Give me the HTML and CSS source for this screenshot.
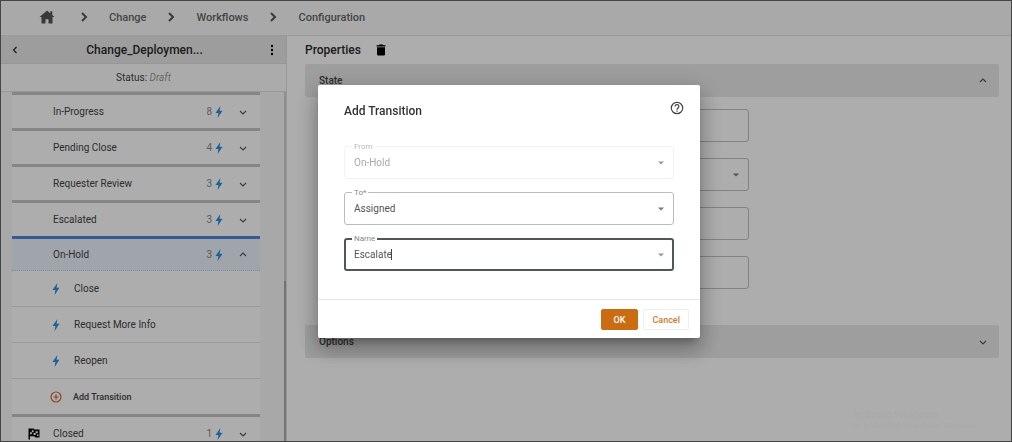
FILE: index.html
```html
<!DOCTYPE html>
<html lang="en">
<head>
  <meta charset="UTF-8" />
  <meta name="viewport" content="width=device-width, initial-scale=1" />
  <title>Workflow Configuration</title>
  <link rel="stylesheet" href="styles.css">
</head>
<body>
  <svg class="sprite" aria-hidden="true">
    <symbol id="bolt" viewBox="0 0 8 12"><path d="M5.4 0 0.5 7H3.4L2.6 12 7.5 4.8H4.6Z" /></symbol>
    <symbol id="down" viewBox="0 0 12 12"><path d="M3 5 6 8 9 5" /></symbol>
    <symbol id="up" viewBox="0 0 12 12"><path d="M3 7 6 4 9 7" /></symbol>
    <symbol id="crumb" viewBox="0 0 10 12"><path d="M3 2 7 6 3 10" /></symbol>
  </svg>

  <nav class="breadcrumb" aria-label="Breadcrumb">
    <a href="#" class="home" aria-label="Home">
      <svg width="16" height="14" viewBox="0 0 16 14"><path d="M8 0.500 15.500 7H13.500V13.500H9.500V9.200H6.500V13.500H2.500V7H0.500ZM11.300 1.300H13.300V5H11.300Z" /></svg>
    </a>
    <svg class="crumb" width="10" height="12"><use href="#crumb" /></svg>
    <a href="#">Change</a>
    <svg class="crumb" width="10" height="12"><use href="#crumb" /></svg>
    <a href="#">Workflows</a>
    <svg class="crumb" width="10" height="12"><use href="#crumb" /></svg>
    <a href="#">Configuration</a>
  </nav>

  <div class="layout">
    <aside class="sidebar">
      <header class="sidebar-header">
        <button class="icon-btn" aria-label="Back">
          <svg class="line back" width="8" height="10" viewBox="0 0 8 10"><path d="M5.500 2 2.500 5 5.500 8" /></svg>
        </button>
        <h2>Change_Deploymen...</h2>
        <button class="icon-btn" aria-label="More">
          <svg width="4" height="12" viewBox="0 0 4 12"><circle cx="2" cy="2" r="1.200" /><circle cx="2" cy="6" r="1.200" /><circle cx="2" cy="10" r="1.200" /></svg>
        </button>
      </header>
      <p class="status">Status: <em>Draft</em></p>
      <div class="states">
        <ul class="state-list">
          <li class="state">
            <span class="name">In-Progress</span><span class="count">8</span>
            <svg class="bolt" width="8" height="12"><use href="#bolt" /></svg>
            <button class="icon-btn" aria-label="Expand In-Progress"><svg class="line" width="12" height="12"><use href="#down" /></svg></button>
          </li>
          <li class="state">
            <span class="name">Pending Close</span><span class="count">4</span>
            <svg class="bolt" width="8" height="12"><use href="#bolt" /></svg>
            <button class="icon-btn" aria-label="Expand Pending Close"><svg class="line" width="12" height="12"><use href="#down" /></svg></button>
          </li>
          <li class="state">
            <span class="name">Requester Review</span><span class="count">3</span>
            <svg class="bolt" width="8" height="12"><use href="#bolt" /></svg>
            <button class="icon-btn" aria-label="Expand Requester Review"><svg class="line" width="12" height="12"><use href="#down" /></svg></button>
          </li>
          <li class="state">
            <span class="name">Escalated</span><span class="count">3</span>
            <svg class="bolt" width="8" height="12"><use href="#bolt" /></svg>
            <button class="icon-btn" aria-label="Expand Escalated"><svg class="line" width="12" height="12"><use href="#down" /></svg></button>
          </li>
          <li class="state active">
            <span class="name">On-Hold</span><span class="count">3</span>
            <svg class="bolt" width="8" height="12"><use href="#bolt" /></svg>
            <button class="icon-btn" aria-label="Collapse On-Hold"><svg class="line" width="12" height="12"><use href="#up" /></svg></button>
          </li>
          <li class="transition"><svg class="bolt" width="8" height="12"><use href="#bolt" /></svg>Close</li>
          <li class="transition"><svg class="bolt" width="8" height="12"><use href="#bolt" /></svg>Request More Info</li>
          <li class="transition"><svg class="bolt" width="8" height="12"><use href="#bolt" /></svg>Reopen</li>
          <li class="transition add">
            <button class="add-btn">
              <svg width="12" height="12" viewBox="0 0 12 12"><circle cx="6" cy="6" r="5" /><path d="M6 3.500V8.500M3.500 6H8.500" /></svg>
              Add Transition
            </button>
          </li>
          <li class="state final">
            <svg class="flag" width="12" height="12" viewBox="0 0 12 12">
              <path fill-rule="evenodd" d="M0.500 0.500H5.500L6.500 1.500H11.500V9.500H7.500L6.300 8.200H2V11.500H0.500ZM3.800 2.200V4.200H5.600V2.200ZM2 4.200V6.200H3.800V4.200ZM7.600 3.200V5.200H9.800V3.200ZM5.600 5V7H7.600V5ZM9 6.500V8H10.500V6.500Z" />
            </svg>
            <span class="name">Closed</span><span class="count">1</span>
            <svg class="bolt" width="8" height="12"><use href="#bolt" /></svg>
            <button class="icon-btn" aria-label="Expand Closed"><svg class="line" width="12" height="12"><use href="#down" /></svg></button>
          </li>
        </ul>
        <div class="scrollbar"></div>
      </div>
    </aside>

    <main class="properties">
      <div class="properties-header">
        <h2>Properties</h2>
        <button class="icon-btn" aria-label="Delete">
          <svg width="10" height="12" viewBox="0 0 10 12"><path d="M3.200 0.500H6.800L7.300 1.200H9.500V2.500H0.500V1.200H2.700ZM1 3.200H9V10.300Q9 11.500 7.800 11.500H2.200Q1 11.500 1 10.300Z" /></svg>
        </button>
      </div>
      <button class="panel" aria-expanded="true">State <svg class="line" width="12" height="12"><use href="#up" /></svg></button>
      <div class="panel-body">
        <input type="text" class="prop" aria-label="State name">
        <div class="prop-select">
          <select class="prop" aria-label="State type"><option></option></select>
          <svg class="arrow" width="6" height="4" viewBox="0 0 6 4"><path d="M0 0.500H6L3 3.500Z" /></svg>
        </div>
        <input type="text" class="prop" aria-label="State description">
        <input type="text" class="prop" aria-label="State owner">
      </div>
      <button class="panel" aria-expanded="false">Options <svg class="line" width="12" height="12"><use href="#down" /></svg></button>
    </main>
  </div>

  <div class="watermark">
    <strong>Activate Windows</strong>
    <span>Go to Settings to activate Windows.</span>
  </div>

  <div class="overlay">
    <form class="dialog" role="dialog" aria-labelledby="dialog-title">
      <header class="dialog-header">
        <h1 id="dialog-title">Add Transition</h1>
        <button type="button" class="icon-btn" aria-label="Help">
          <svg class="help" width="14" height="14" viewBox="0 0 14 14"><circle cx="7" cy="7" r="5.700" /><path d="M5.100 5.600C5.100 3 8.900 3.100 8.900 5.500C8.900 6.900 7 7 7 8.700M7 9.600V10.800" /></svg>
        </button>
      </header>
      <div class="dialog-body">
        <div class="field disabled">
          <label for="from">From</label>
          <select id="from" disabled><option>On-Hold</option></select>
          <svg class="arrow" width="6" height="4" viewBox="0 0 6 4"><path d="M0 0.500H6L3 3.500Z" /></svg>
        </div>
        <div class="field">
          <label for="to">To*</label>
          <select id="to"><option>Assigned</option></select>
          <svg class="arrow" width="6" height="4" viewBox="0 0 6 4"><path d="M0 0.500H6L3 3.500Z" /></svg>
        </div>
        <div class="field focused">
          <label for="name">Name</label>
          <input type="text" id="name" value="Escalate">
          <span class="caret"></span>
          <svg class="arrow" width="6" height="4" viewBox="0 0 6 4"><path d="M0 0.500H6L3 3.500Z" /></svg>
        </div>
      </div>
      <footer class="dialog-footer">
        <button type="button" class="btn primary">OK</button>
        <button type="button" class="btn">Cancel</button>
      </footer>
    </form>
  </div>
</body>
</html>
```
FILE: styles.css
```css
* {
  box-sizing: border-box;
}
body {
  display: flex;
  flex-direction: column;
  height: 100vh;
  margin: 0;
  border: 1px solid #666;
  overflow: hidden;
  background: #fff;
  color: #444;
  font-family: Roboto, Arial, sans-serif;
  font-size: 10px;
}
h1, h2, p, ul {
  margin: 0;
  padding: 0;
}
button, input, select {
  font: inherit;
  color: inherit;
}
.sprite {
  display: none;
}
.icon-btn {
  display: flex;
  padding: 0;
  border: none;
  background: none;
  cursor: pointer;
}
.line {
  fill: none;
  stroke: #555;
  stroke-width: 1.1;
}
.back {
  stroke: #222;
}

.breadcrumb {
  display: flex;
  align-items: center;
  height: 35px;
  padding: 0 38px 2px;
  border-bottom: 1px solid #e4e4e4;
  background: #fafafa;
  font-size: 11px;
  font-weight: 500;
}
.breadcrumb a {
  color: #666;
  text-decoration: none;
}
.breadcrumb .home {
  display: flex;
  margin-right: 4px;
}
.home svg {
  fill: #555;
}
.crumb {
  margin: 0 20px;
  fill: none;
  stroke: #555;
  stroke-width: 2;
}

.layout {
  display: flex;
  flex: 1;
  min-height: 0;
}
.sidebar {
  display: flex;
  flex-direction: column;
  width: 286px;
  flex-shrink: 0;
  border-right: 1px solid #e0e0e0;
  background: #f8f8f8;
}
.sidebar-header {
  display: flex;
  align-items: center;
  justify-content: space-between;
  height: 28px;
  padding: 0 12px 0 10px;
  border-bottom: 1px solid #ddd;
  background: #e8e8e8;
}
.sidebar-header h2, .properties h2 {
  color: #2c2c2c;
  font-size: 12px;
  font-weight: 500;
}
.status {
  height: 28px;
  border-bottom: 1px solid #e0e0e0;
  background: #fdfdfd;
  line-height: 28px;
  text-align: center;
}
.status em {
  color: #999;
}
.states {
  display: flex;
  flex: 1;
  justify-content: space-between;
  min-height: 0;
  padding-left: 11px;
  overflow: hidden;
}
.state-list {
  width: 248px;
  list-style: none;
}
.scrollbar {
  width: 2px;
  background: linear-gradient(#d2d2d2 189px, #aaa 189px);
}
.state {
  display: flex;
  align-items: center;
  height: 36px;
  padding: 0 11px 0 41px;
  border-top: 3px solid #c4c4c4;
  background: #fff;
}
.state .name {
  flex: 1;
}
.count {
  color: #888;
}
.bolt {
  fill: #2a8fe0;
}
.state .bolt {
  margin: 0 14px 0 3px;
}
.active {
  height: 35px;
  border-top-color: #4f83dc;
  border-bottom: 1px dotted #b8cfe4;
  background: #ebf3fb;
}
.final {
  padding-left: 16px;
}
.flag {
  margin-right: 13px;
  fill: #000;
}
.transition {
  display: flex;
  align-items: center;
  gap: 14px;
  height: 36px;
  padding-left: 40px;
  border-bottom: 1px solid #e4e4e4;
  background: #fff;
}
.transition.add {
  height: 35px;
  padding-left: 38px;
  border-bottom: none;
}
.add-btn {
  display: flex;
  align-items: center;
  gap: 11px;
  padding: 0;
  border: none;
  background: none;
  font-size: 9px;
  font-weight: 500;
  cursor: pointer;
}
.add-btn svg {
  fill: none;
  stroke: #d3663a;
  stroke-width: 1.2;
}

.properties {
  flex: 1;
  padding: 0 12px 0 18px;
}
.properties-header {
  display: flex;
  align-items: center;
  gap: 15px;
  height: 28px;
}
.panel {
  display: flex;
  align-items: center;
  justify-content: space-between;
  width: 100%;
  height: 33px;
  padding: 0 10px 0 14px;
  border: none;
  border-radius: 2px;
  background: #e9e9e9;
  font-weight: 500;
}
.panel-body {
  display: grid;
  gap: 16px;
  max-width: 444px;
  padding: 12px 0 36px 14px;
}
.prop {
  display: block;
  width: 100%;
  height: 33px;
  border: 1px solid #c0c0c0;
  border-radius: 3px;
  background: #fff;
  appearance: none;
}
.prop-select, .field {
  position: relative;
}
.arrow {
  position: absolute;
  top: 15px;
  right: 10px;
  fill: #777;
  pointer-events: none;
}

.watermark {
  position: absolute;
  right: 34px;
  bottom: 12px;
  color: #fbfbfb;
  font-size: 8px;
}
.watermark strong {
  display: block;
  font-size: 11px;
  font-weight: 400;
}

.overlay {
  position: fixed;
  inset: 0;
  display: flex;
  align-items: flex-start;
  justify-content: center;
  padding: 85px 0 0 6px;
  background: rgba(0, 0, 0, 0.32);
}
.dialog {
  width: 382px;
  max-width: 100%;
  border-radius: 2px;
  background: #fff;
  box-shadow: 0 6px 8px -4px rgba(0, 0, 0, 0.3), 0 12px 20px 2px rgba(0, 0, 0, 0.2), 0 4px 24px 4px rgba(0, 0, 0, 0.12);
}
.dialog-header {
  display: flex;
  justify-content: space-between;
  padding: 16px 16px 0 26px;
}
.dialog-header h1 {
  color: #333;
  font-size: 12px;
  font-weight: 500;
  line-height: 20px;
}
.help {
  fill: none;
  stroke: #444;
  stroke-width: 1.2;
}
.dialog-body {
  display: grid;
  gap: 13px;
  padding: 25px 26px 28px;
}
.field label {
  position: absolute;
  top: -4px;
  left: 8px;
  padding: 0 2px;
  background: #fff;
  color: #8a8a8a;
  font-size: 8px;
  line-height: 9px;
}
.field select, .field input {
  display: block;
  width: 100%;
  height: 33px;
  padding: 0 9px;
  border: 1px solid #bbb;
  border-radius: 3px;
  background: #fff;
  color: #555;
  outline: none;
  appearance: none;
}
.field.disabled select {
  border-color: #f2f2f2;
  color: #aaa;
  opacity: 1;
}
.field.disabled label {
  color: #bbb;
}
.disabled .arrow, .focused .arrow {
  fill: #999;
}
.field.focused input {
  padding: 0 8px;
  border: 2px solid #50565d;
}
.caret {
  position: absolute;
  top: 11px;
  left: 47px;
  width: 1px;
  height: 11px;
  background: #444;
}
.dialog-footer {
  display: flex;
  justify-content: flex-end;
  gap: 5px;
  padding: 9px 11px 8px;
  border-top: 1px solid #e8e8e8;
}
.btn {
  height: 21px;
  padding: 0 8px;
  border: 1px solid #eee;
  border-radius: 2px;
  background: #fff;
  color: #d07a2c;
  font-size: 9px;
  font-weight: 500;
  cursor: pointer;
}
.btn.primary {
  padding: 0 12px;
  border-color: #c96c12;
  background: #c96c12;
  color: #fff;
}
```
